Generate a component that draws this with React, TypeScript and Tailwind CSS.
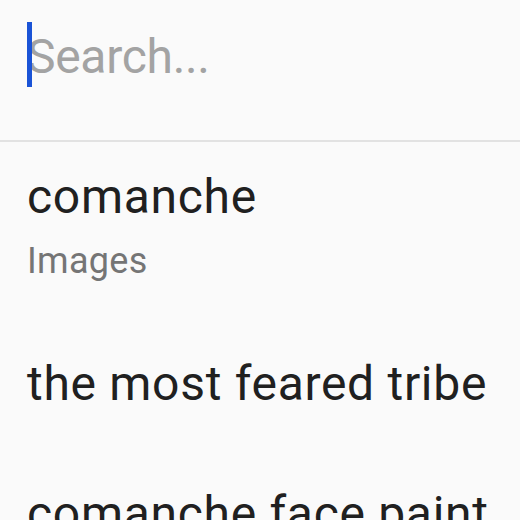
import React from 'react'

const suggestions = [
  { title: 'comanche', sub: 'Images' },
  { title: 'the most feared tribe' },
  { title: 'comanche face paint' },
]

export default function App() {
  return (
    <div
      className="w-[520px] h-[520px] overflow-hidden bg-[#fafafa]"
      style={{ fontFamily: 'Roboto, "Noto Sans", sans-serif' }}
    >
      {/* search field */}
      <div className="h-[142px] border-b-2 border-[#e2e2e2] pt-[29px]">
        <div className="relative pl-[27px]">
          <span className="absolute left-[27px] top-[-7px] w-[5px] h-[65px] bg-[#1a53d6]" />
          <div className="text-[48px] leading-[56px] text-[#a3a3a3] tracking-[-0.3px]">Search...</div>
        </div>
      </div>

      {/* suggestions */}
      <div className="flex flex-col">
        <div className="pl-[27px] pt-[27px] pb-[36px]">
          <div className="text-[48px] leading-[56px] text-[#202020] tracking-[0.7px]">
            {suggestions[0].title}
          </div>
          <div className="mt-[14px] text-[36px] leading-[44px] text-[#757575] tracking-[0.3px]">
            {suggestions[0].sub}
          </div>
        </div>
        {suggestions.slice(1).map((s) => (
          <div key={s.title} className="pl-[27px] py-[37px]">
            <div className="text-[48px] leading-[56px] text-[#202020] tracking-[0.7px] whitespace-nowrap">
              {s.title}
            </div>
          </div>
        ))}
      </div>
    </div>
  )
}
